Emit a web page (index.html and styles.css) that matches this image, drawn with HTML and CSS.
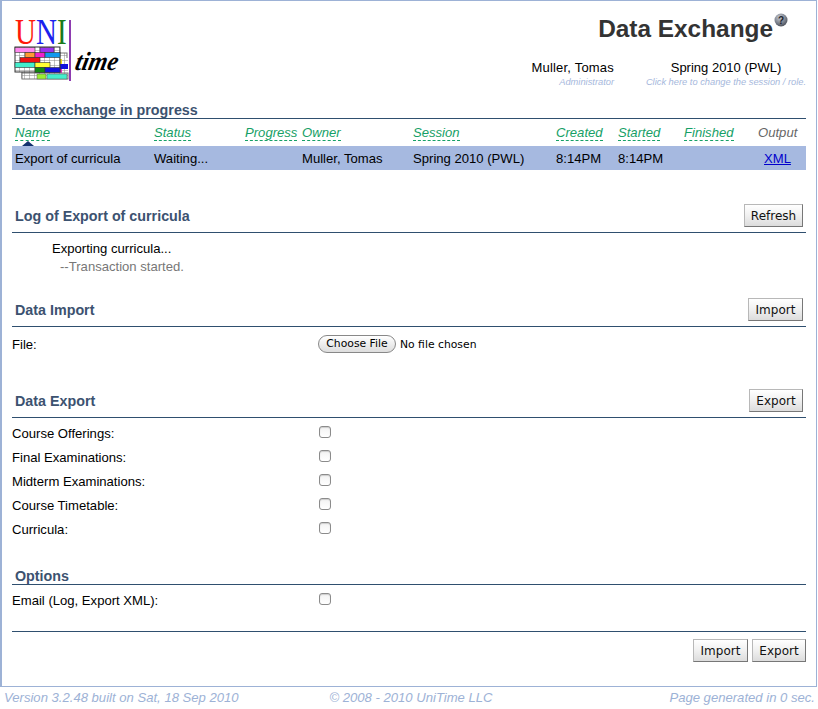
FILE: index.html
```html
<!DOCTYPE html>
<html>
<head>
<meta charset="utf-8">
<title>Data Exchange</title>
<link rel="stylesheet" href="styles.css">
</head>
<body>
<div class="frame">
  <header class="top">
    <svg class="logo" width="116" height="72" viewBox="0 -8 116 72">
      <defs>
        <pattern id="cells" width="5" height="5" patternUnits="userSpaceOnUse">
          <rect width="5" height="5" fill="#fff"/>
          <path d="M0 0H5M0 0V5" stroke="#888" stroke-width="1" fill="none"/>
        </pattern>
      </defs>
      <text class="uni" transform="translate(1 24) scale(1 1.22)"><tspan fill="#ff1a0a">U</tspan><tspan fill="#1a22ee">N</tspan><tspan fill="#1a7a1a">I</tspan></text>
      <rect x="8" y="33" width="45" height="25" fill="url(#cells)" stroke="#777"/>
      <rect x="46" y="38" width="8" height="20" fill="url(#cells)"/>
      <rect x="46" y="44" width="8" height="5" fill="#1111dd"/>
      <rect x="46" y="39" width="2" height="5" fill="#eedd22"/>
      <rect x="46" y="49" width="2" height="4" fill="#ee22cc"/>
      <rect x="8" y="53" width="46" height="6" fill="url(#cells)" stroke="#777"/>
      <rect x="23" y="54" width="9" height="5" fill="#99ee33" stroke="#555" stroke-width=".5"/>
      <rect x="33" y="54" width="20" height="5" fill="#44eecc" stroke="#555" stroke-width=".5"/>
      <rect x="1" y="27" width="45" height="25" fill="url(#cells)" stroke="#333"/>
      <rect x="1" y="27.5" width="20" height="5" fill="#ff88ee" stroke="#333" stroke-width=".6"/>
      <rect x="26" y="27.5" width="14" height="5" fill="#9933ee" stroke="#333" stroke-width=".6"/>
      <rect x="11" y="32.5" width="10" height="5" fill="#ff9933" stroke="#333" stroke-width=".6"/>
      <rect x="21" y="32.5" width="10" height="5" fill="#ee22cc" stroke="#333" stroke-width=".6"/>
      <rect x="31" y="32.5" width="15" height="5" fill="#1199ee" stroke="#333" stroke-width=".6"/>
      <rect x="6" y="37.5" width="20" height="5" fill="#ee1111" stroke="#333" stroke-width=".6"/>
      <rect x="1" y="42.5" width="20" height="5" fill="#44eecc" stroke="#333" stroke-width=".6"/>
      <rect x="21" y="42.5" width="15" height="5" fill="#ffff33" stroke="#333" stroke-width=".6"/>
      <rect x="21" y="47.5" width="10" height="5" fill="#118811" stroke="#333" stroke-width=".6"/>
      <rect x="31" y="47.5" width="15" height="5" fill="#1111dd" stroke="#333" stroke-width=".6"/>
      <rect x="55" y="0" width="2" height="61" fill="#8e3bb0"/>
      <text class="time" transform="translate(60 50) skewX(-12) scale(1 1.1)">time</text>
    </svg>
    <div class="top-right">
      <div class="title-line">
        <h1 class="title">Data Exchange</h1>
        <svg class="help" width="14" height="14" viewBox="0 0 14 14">
          <defs>
            <radialGradient id="ball" cx=".4" cy=".3" r=".8">
              <stop offset="0" stop-color="#c8ccd4"/>
              <stop offset=".6" stop-color="#767c88"/>
              <stop offset="1" stop-color="#3c4048"/>
            </radialGradient>
          </defs>
          <circle cx="7" cy="7" r="6.5" fill="url(#ball)"/>
          <text class="help-q" x="7" y="10.5" text-anchor="middle">?</text>
        </svg>
      </div>
      <div class="context">
        <div class="ctx-user">
          <div class="ctx-main ctx-name">Muller, Tomas</div>
          <div class="ctx-sub">Administrator</div>
        </div>
        <div class="ctx-session">
          <div class="ctx-main">Spring 2010 (PWL)</div>
          <div class="ctx-sub">Click here to change the session / role.</div>
        </div>
      </div>
    </div>
  </header>

  <main class="content">
    <h2 class="head head-plain">Data exchange in progress</h2>
    <table class="jobs">
      <colgroup>
        <col class="c-name"><col class="c-status"><col class="c-progress"><col class="c-owner"><col class="c-session"><col class="c-created"><col class="c-started"><col class="c-finished"><col class="c-output">
      </colgroup>
      <thead>
        <tr>
          <th class="sorted"><span class="sort">Name</span><i class="arrow"></i></th>
          <th><span class="sort">Status</span></th>
          <th><span class="sort">Progress</span></th>
          <th><span class="sort">Owner</span></th>
          <th><span class="sort">Session</span></th>
          <th><span class="sort">Created</span></th>
          <th><span class="sort">Started</span></th>
          <th><span class="sort">Finished</span></th>
          <th class="out">Output</th>
        </tr>
      </thead>
      <tbody>
        <tr>
          <td>Export of curricula</td>
          <td>Waiting...</td>
          <td></td>
          <td>Muller, Tomas</td>
          <td>Spring 2010 (PWL)</td>
          <td>8:14PM</td>
          <td>8:14PM</td>
          <td></td>
          <td class="out-link"><a href="#">XML</a></td>
        </tr>
      </tbody>
    </table>

    <div class="head head-log"><h2>Log of Export of curricula</h2><button class="btn btn-refresh">Refresh</button></div>
    <div class="log">
      <div class="log-main">Exporting curricula...</div>
      <div class="log-sub">--Transaction started.</div>
    </div>

    <div class="head head-import"><h2>Data Import</h2><button class="btn btn-import">Import</button></div>
    <div class="row row-file">
      <span>File:</span>
      <span class="file"><span class="file-btn">Choose File</span><span class="file-none">No file chosen</span></span>
    </div>

    <div class="head head-export"><h2>Data Export</h2><button class="btn btn-export">Export</button></div>
    <div class="row row-first"><span>Course Offerings:</span><input class="check" type="checkbox"></div>
    <div class="row"><span>Final Examinations:</span><input class="check" type="checkbox"></div>
    <div class="row"><span>Midterm Examinations:</span><input class="check" type="checkbox"></div>
    <div class="row"><span>Course Timetable:</span><input class="check" type="checkbox"></div>
    <div class="row"><span>Curricula:</span><input class="check" type="checkbox"></div>

    <h2 class="head head-plain head-options">Options</h2>
    <div class="row row-first"><span>Email (Log, Export XML):</span><input class="check" type="checkbox"></div>

    <div class="actions">
      <button class="btn btn-import">Import</button>
      <button class="btn btn-export">Export</button>
    </div>
  </main>
</div>
<footer class="foot">
  <span>Version 3.2.48 built on Sat, 18 Sep 2010</span>
  <span>© 2008 - 2010 UniTime LLC</span>
  <span class="foot-right">Page generated in 0 sec.</span>
</footer>
</body>
</html>
```
FILE: styles.css
```css
* { box-sizing: border-box; }
html, body { margin: 0; padding: 0; }
body {
  width: 818px;
  height: 709px;
  background: #fff;
  font-family: "Liberation Sans", Arial, sans-serif;
  font-size: 13.1px;
  color: #000;
  overflow: hidden;
}
.frame {
  width: 817px;
  height: 687px;
  border: 1px solid #9db2d6;
  border-width: 1px 1px 1px 2px;
  padding: 0 10px;
}
.top {
  display: flex;
  justify-content: space-between;
  height: 101px;
  padding-top: 11px;
}
.logo { margin-left: 2px; display: block; }
.uni { font-family: "Liberation Serif", serif; font-size: 29px; }
.time { font-family: "Liberation Serif", serif; font-style: italic; font-weight: bold; font-size: 24px; fill: #000; }
.top-right { display: flex; flex-direction: column; align-items: flex-end; margin-top: -11px; }
.title-line { display: flex; align-items: flex-start; height: 59px; padding-top: 12px; padding-right: 18px; }
.title { margin: 1px 0 0; font-size: 24.4px; font-weight: bold; color: #333; line-height: 30px; }
.help { margin-left: 1px; }
.help-q { font: bold 10px "Liberation Sans", sans-serif; fill: #20242c; }
.context { display: flex; margin-right: -2px; }
.ctx-user { width: 84px; text-align: right; margin-right: 30px; }
.ctx-session { width: 164px; text-align: center; }
.ctx-main { font-size: 13px; line-height: 15px; }
.ctx-name { letter-spacing: .2px; }
.ctx-sub { font-size: 9.3px; font-style: italic; color: #a6b8dc; line-height: 12px; margin-top: 1px; white-space: nowrap; }

.head h2, h2.head { margin: 0; font-size: 14.3px; font-weight: bold; color: #3c5270; }
.head { border-bottom: 1px solid #2f4f6f; display: flex; justify-content: space-between; align-items: flex-end; width: 794px; }
.head h2 { padding: 0 0 8px 3px; line-height: 16px; }
.head-plain { padding-left: 3px; line-height: 16px; height: 17px; }
h2.head-options { margin-top: 27px; }
.content { display: flex; flex-direction: column; }

.jobs { border-collapse: collapse; table-layout: fixed; width: 794px; margin-top: 5px; }
.c-name { width: 139px; } .c-status { width: 91px; } .c-progress { width: 57px; } .c-owner { width: 111px; }
.c-session { width: 143px; } .c-created { width: 62px; } .c-started { width: 66px; } .c-finished { width: 74px; } .c-output { width: 51px; }
.jobs th { font-weight: normal; font-style: italic; text-align: left; padding: 1px 0 0 3px; height: 22px; vertical-align: top; white-space: nowrap; position: relative; line-height: 16px; }
.sort { color: #16a066; border-bottom: 1px dashed #16a066; display: inline-block; height: 16px; }
.jobs .out { color: #666; }
.arrow { position: absolute; left: 10px; top: 17px; width: 0; height: 0; border: 6px solid transparent; border-top: 0; border-bottom: 5px solid #13306e; }
.jobs td { background: #a6b9e0; height: 24px; padding: 0 0 0 3px; white-space: nowrap; }
.jobs td.out-link { padding-left: 9px; }
.jobs a { color: #0000cc; }

.btn {
  font-family: "DejaVu Sans", sans-serif;
  font-size: 12px;
  height: 23px;
  padding: 0;
  background: linear-gradient(#fff, #f0f0f0 50%, #dcdcdc);
  border: 1px solid #b8b8b8;
  border-right-color: #777;
  border-bottom-color: #777;
  color: #111;
}
.btn-refresh { width: 59px; margin-right: 3px; margin-bottom: 5px; }
.btn-import { width: 55px; margin-right: 3px; margin-bottom: 5px; }
.btn-export { width: 54px; margin-right: 3px; margin-bottom: 5px; }

.head-log { margin-top: 34px; height: 29px; }
.head-import { margin-top: 21px; height: 29px; }
.head-export { margin-top: 33px; height: 29px; }

.log { height: 44px; padding: 7px 0 0 40px; line-height: 18px; }
.log-sub { color: #777; padding-left: 8px; font-size: 13.1px; }

.row { display: grid; grid-template-columns: 306px 1fr; align-items: center; height: 24px; width: 794px; }
.row-file { margin-top: 5px; }
.row-first { margin-top: 3px; }
.check { appearance: none; margin: 0 0 2px 1px; width: 12px; height: 12px; border: 1px solid #8b8b8b; border-radius: 3px; background: linear-gradient(#f2f2f2, #fff); box-shadow: inset 0 1px 1px #ccc; }
.file { display: flex; align-items: center; font-family: "DejaVu Sans", sans-serif; font-size: 10.8px; }
.file-btn { width: 78px; height: 18px; border: 1px solid #888; border-radius: 9px; background: linear-gradient(#fff, #ececec 55%, #ddd); text-align: center; line-height: 16px; }
.file-none { margin-left: 4px; }

.actions { width: 794px; margin-top: 19px; border-top: 1px solid #2f4f6f; padding-top: 7px; display: flex; justify-content: flex-end; gap: 1px; }
.actions .btn { margin: 0; }
.actions .btn-export { margin-left: 3px; }

.foot { display: grid; grid-template-columns: 1fr auto 1fr; padding: 3px 0 0 4px; font-size: 13.1px; font-style: italic; color: #9db2d6; width: 818px; }
.foot-right { text-align: right; margin-right: 3px; }
```
